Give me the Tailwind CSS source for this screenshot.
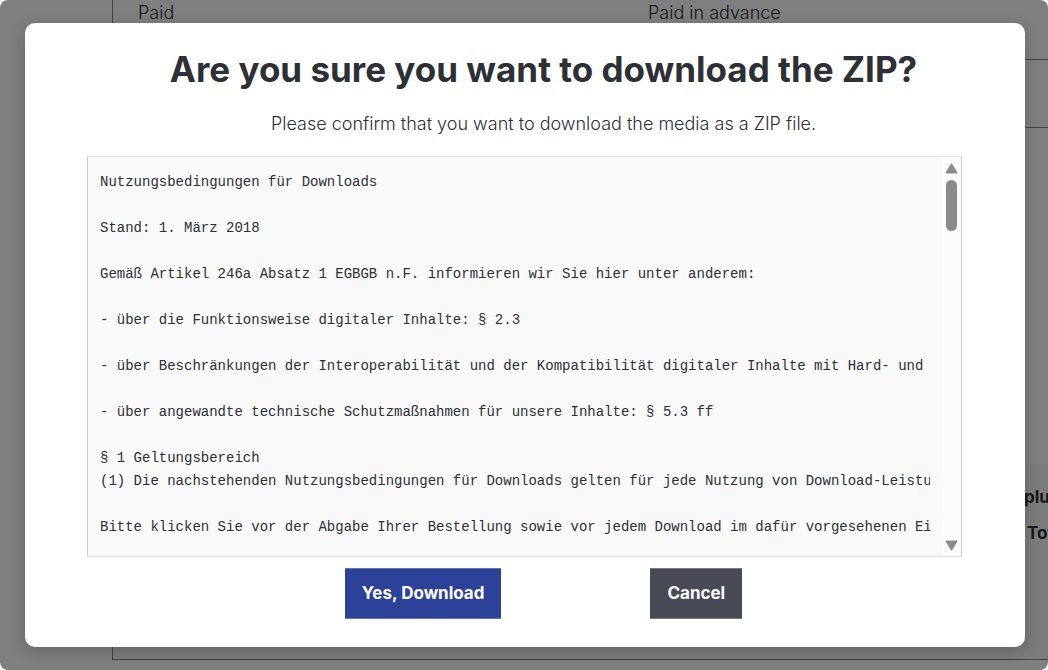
<!DOCTYPE html>
<html lang="en">
<head>
<meta charset="utf-8">
<meta name="viewport" content="width=device-width, initial-scale=1">
<title>Download ZIP</title>
<script src="https://cdn.jsdelivr.net/npm/@tailwindcss/browser@4"></script>
</head>
<body class="relative h-screen overflow-hidden bg-white font-['Inter',sans-serif] text-[#2d3035]">

<!-- Order page behind the dialog -->
<main class="flex h-full flex-col overflow-hidden pb-2.5 pl-28 text-lg leading-[26px]">
  <section class="flex flex-1 flex-col border-b border-l border-[#83838f]">
    <div class="grid h-15 shrink-0 grid-cols-[510px_1fr] border-b border-[#83838f] pl-[25px] font-[350]">
      <p>Paid</p>
      <p>Paid in advance</p>
    </div>
    <div class="h-17 shrink-0 border-b border-[#83838f]"></div>
    <div class="flex-1"></div>
    <div class="flex h-[195px] shrink-0 flex-col items-end overflow-hidden bg-[#f8f8f8] pt-[15px] text-[17px] leading-9 font-bold whitespace-nowrap">
      <p class="w-6">plus</p>
      <p class="w-[21px]">Total</p>
    </div>
  </section>
</main>

<div class="absolute inset-0 flex flex-col rounded-lg bg-black/50 py-[23px] pr-[23px] pl-[25px]">
  <div role="dialog" aria-modal="true" aria-labelledby="title" class="flex flex-1 flex-col items-stretch rounded-[10px] bg-white pt-[23px] pr-[25px] pl-[62px] shadow-[0_4px_16px_rgba(0,0,0,0.2)]">
    <h1 id="title" class="text-center text-[35px] leading-[46px] font-bold">Are you sure you want to download the ZIP?</h1>
    <p class="mt-[18px] text-center text-lg leading-[27px] font-[350]">Please confirm that you want to download the media as a ZIP file.</p>
    <div class="mt-[19px] mr-[38px] flex border border-x-[#ccc] border-y-[#e2e2e2] bg-[#f9f9f9]">
      <textarea readonly aria-label="Nutzungsbedingungen" class="mx-3 mt-3.5 mb-2.5 h-[375px] min-w-0 flex-1 resize-none overflow-hidden font-['Liberation_Mono',monospace] text-sm leading-[23px] whitespace-pre outline-none">Nutzungsbedingungen für Downloads

Stand: 1. März 2018

Gemäß Artikel 246a Absatz 1 EGBGB n.F. informieren wir Sie hier unter anderem:

- über die Funktionsweise digitaler Inhalte: § 2.3

- über Beschränkungen der Interoperabilität und der Kompatibilität digitaler Inhalte mit Hard- und

- über angewandte technische Schutzmaßnahmen für unsere Inhalte: § 5.3 ff

§ 1 Geltungsbereich
(1) Die nachstehenden Nutzungsbedingungen für Downloads gelten für jede Nutzung von Download-Leistu

Bitte klicken Sie vor der Abgabe Ihrer Bestellung sowie vor jedem Download im dafür vorgesehenen Ei</textarea>
      <!-- Scrollbar -->
      <div class="flex w-[19px] flex-col items-center bg-[#fcfcfc] pt-1.5 pb-[5px]" aria-hidden="true">
        <svg class="h-[11px] w-[13px]" viewBox="0 0 13 11"><path d="M6.5 1.2 11.8 9.8H1.2Z" fill="#8b8b8b" stroke="#8b8b8b" stroke-width="1.4" stroke-linejoin="round"/></svg>
        <div class="mt-1.5 h-[51px] w-[11px] rounded-full bg-[#8b8b8b]"></div>
        <svg class="mt-auto h-[11px] w-[13px]" viewBox="0 0 13 11"><path d="M6.5 9.8 11.8 1.2H1.2Z" fill="#8b8b8b" stroke="#8b8b8b" stroke-width="1.4" stroke-linejoin="round"/></svg>
      </div>
    </div>
    <div class="mt-[11px] flex justify-center gap-[149px]">
      <button type="button" class="h-[51px] border-y border-[#6474b4] bg-[#2c4198] px-[17px] text-[17px] font-bold text-white">Yes, Download</button>
      <button type="button" class="h-[51px] border-y border-[#777983] bg-[#484a55] px-[17px] text-[17px] font-bold text-white">Cancel</button>
    </div>
  </div>
</div>
</body>
</html>
